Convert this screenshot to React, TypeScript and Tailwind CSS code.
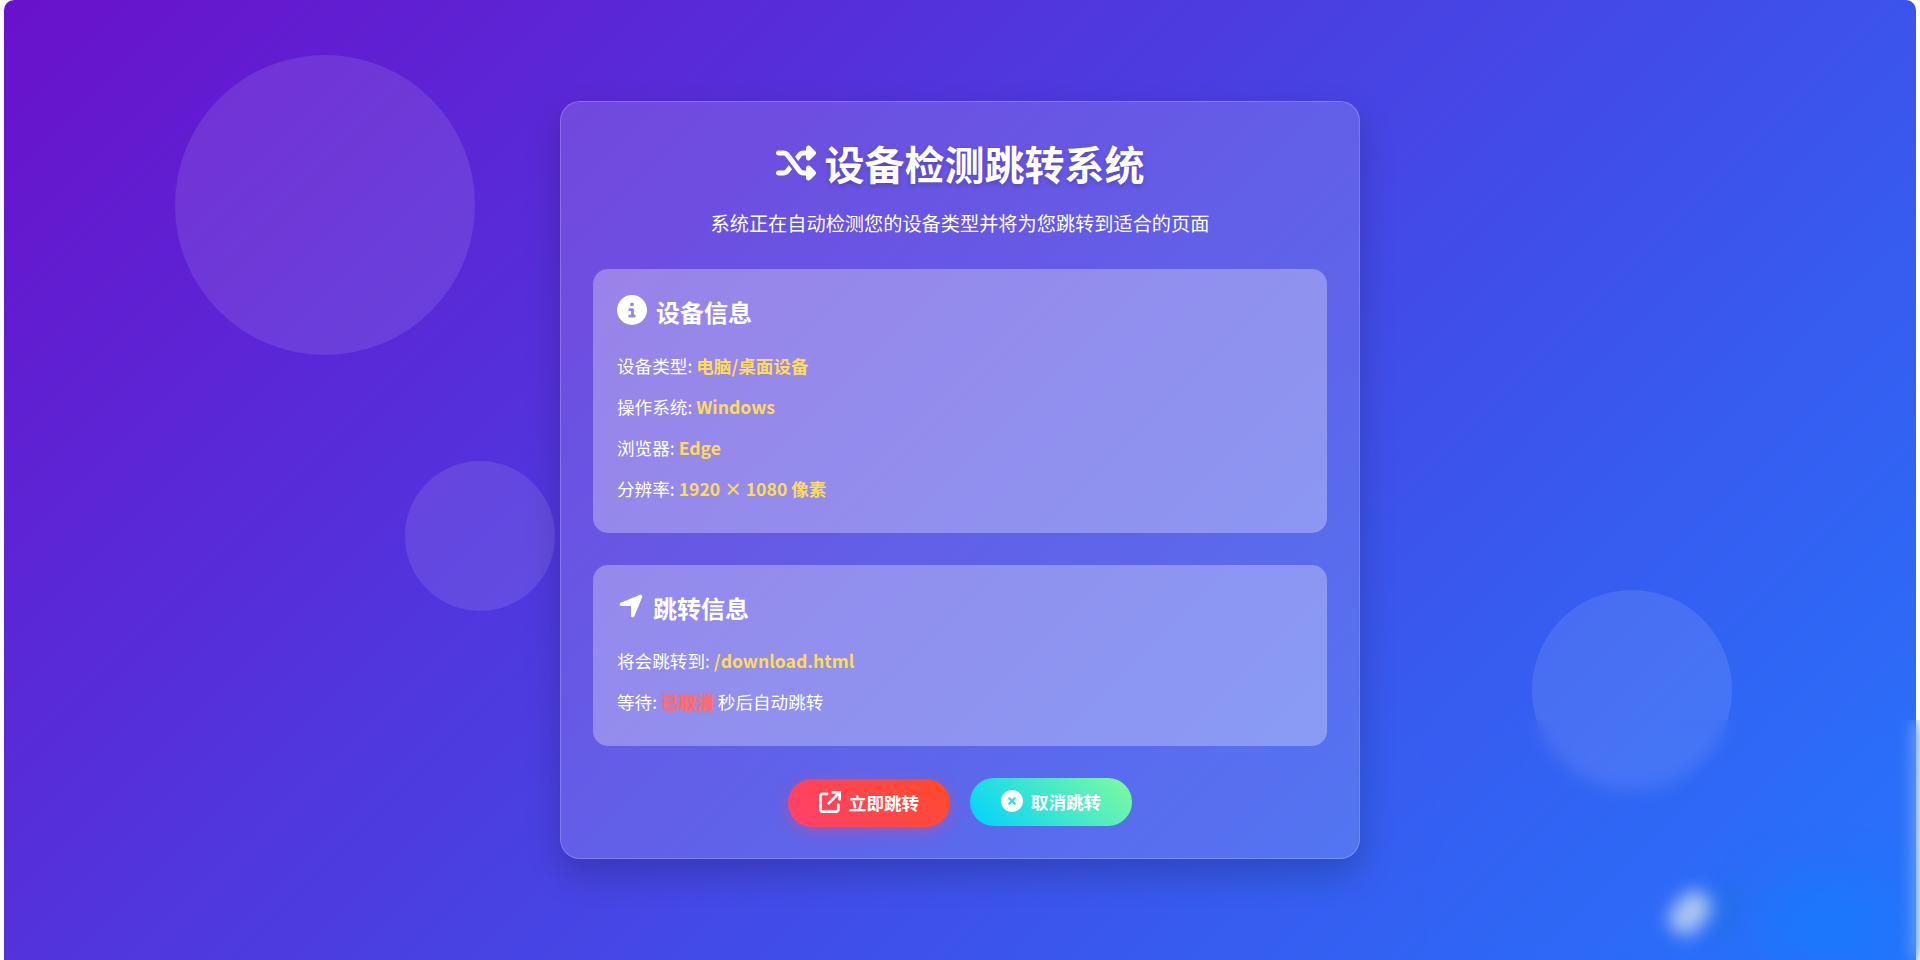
import {
  FaShuffle,
  FaCircleInfo,
  FaLocationArrow,
  FaCircleXmark,
  FaArrowUpRightFromSquare,
} from "react-icons/fa6";

const Row = ({ label, value }: { label: string; value: string }) => (
  <p className="mb-[13px] text-[17.6px] leading-[28px]">
    {label}: <span className="font-bold text-[#ffdb5c]">{value}</span>
  </p>
);

export default function App() {
  return (
    <div className="relative h-[960px] w-full overflow-hidden bg-white px-[4px] font-['Noto_Sans_CJK_SC','Noto_Sans',sans-serif] text-white">
      <div className="relative flex h-full items-center justify-center overflow-hidden rounded-t-[10px] bg-[linear-gradient(135deg,#6a11cb,#2575fc)]">
        <div className="absolute top-[55px] left-[171px] h-[300px] w-[300px] rounded-full bg-white/10" />
        <div className="absolute top-[461px] left-[401px] h-[150px] w-[150px] rounded-full bg-white/10" />
        <div className="absolute top-[590px] left-[1528px] h-[200px] w-[200px] rounded-full bg-white/10" />

        <div className="relative w-[800px] rounded-[20px] border border-white/20 bg-white/15 p-[32px] shadow-[0_15px_35px_rgba(0,0,0,0.2)]">
          <h1 className="-mt-[3px] flex items-center justify-center gap-[9px] text-[40px] leading-[64px] font-bold [text-shadow:0_2px_5px_rgba(0,0,0,0.2)]">
            <FaShuffle className="text-[40px]" />
            设备检测跳转系统
          </h1>
          <p className="mt-[13px] mb-[31px] text-center text-[19.2px] leading-[30px]">
            系统正在自动检测您的设备类型并将为您跳转到适合的页面
          </p>

          <section className="mb-[32px] rounded-[15px] bg-white/30 px-[24px] pt-[24px] pb-[17px]">
            <h2 className="mb-[21px] flex items-center gap-[9px] text-[24px] leading-[38px] font-bold">
              <FaCircleInfo className="-mt-[4px] text-[30px]" />
              设备信息
            </h2>
            <Row label="设备类型" value="电脑/桌面设备" />
            <Row label="操作系统" value="Windows" />
            <Row label="浏览器" value="Edge" />
            <Row label="分辨率" value="1920 × 1080 像素" />
          </section>

          <section className="mb-[32px] rounded-[15px] bg-white/30 px-[24px] pt-[24px] pb-[17px]">
            <h2 className="mb-[20px] flex items-center gap-[8px] text-[24px] leading-[38px] font-bold">
              <FaLocationArrow className="-mt-[5px] text-[28px]" />
              跳转信息
            </h2>
            <Row label="将会跳转到" value="/download.html" />
            <p className="mb-[13px] text-[17.6px] leading-[28px]">
              等待:{" "}
              <span className="font-bold text-[#ff6b6b] [text-shadow:0_0_4px_#ff6b6b]">已取消</span>{" "}
              秒后自动跳转
            </p>
          </section>

          <div className="flex justify-center gap-[20px]">
            <button className="flex h-[48px] w-[162px] translate-y-[1px] items-center justify-center gap-[8px] rounded-full bg-[linear-gradient(45deg,#ff416c,#ff4b2b)] text-[17.6px] font-bold shadow-[0_4px_15px_rgba(255,65,108,0.4)]">
              <FaArrowUpRightFromSquare className="-mt-[2px] text-[22px]" />
              立即跳转
            </button>
            <button className="flex h-[48px] w-[162px] items-center justify-center gap-[8px] rounded-full bg-[linear-gradient(45deg,#00d2ff,#80fb9e)] text-[17.6px] font-bold">
              <FaCircleXmark className="-mt-[2px] text-[22px]" />
              取消跳转
            </button>
          </div>
        </div>
      </div>

      {/* blurred widget sitting over the bottom right corner */}
      <div className="absolute right-0 bottom-0 h-[240px] w-[500px] overflow-hidden backdrop-blur-[8px]">
        <div className="absolute top-[160px] left-[340px] h-[80px] w-[130px] rounded-full bg-[#127dff]/60 blur-[24px]" />
        <div className="absolute top-[165px] left-[292px] h-[50px] w-[26px] rotate-[10deg] rounded-full bg-[#1670d8]/40 blur-[10px]" />
        <div className="absolute top-[170px] left-[254px] h-[46px] w-[32px] rotate-[40deg] rounded-[14px] bg-[#c4d6f2]/85 blur-[9px]" />
      </div>
    </div>
  );
}
